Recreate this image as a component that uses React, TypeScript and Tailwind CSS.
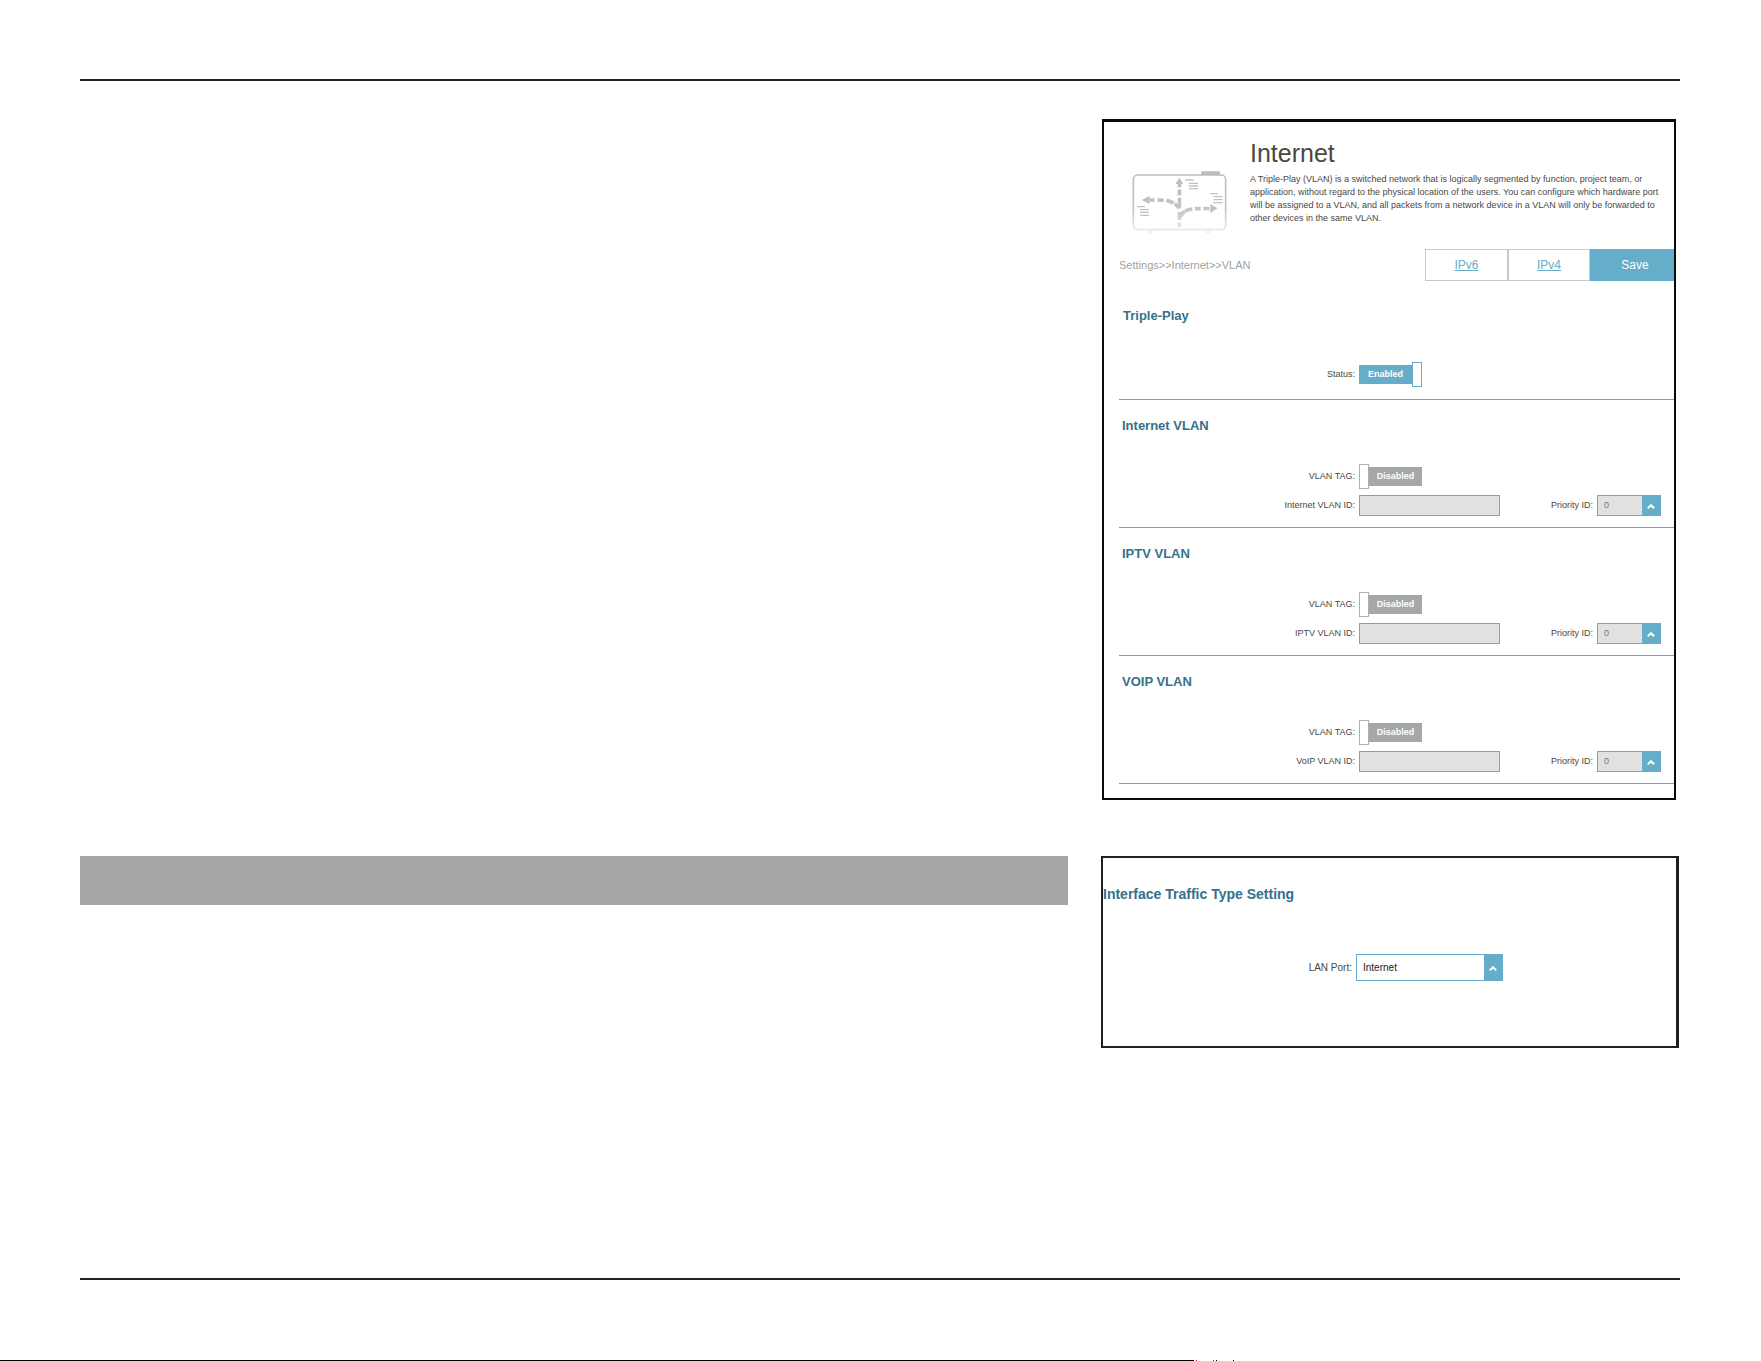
import React, { useState } from "react";

const vlans = [
  { id: "internet", title: "Internet VLAN", label: "Internet VLAN ID:" },
  { id: "iptv", title: "IPTV VLAN", label: "IPTV VLAN ID:" },
  { id: "voip", title: "VOIP VLAN", label: "VoIP VLAN ID:" },
];

const priorities = ["0", "1", "2", "3", "4", "5", "6", "7"];

function RouterIcon() {
  return (
    <svg
      viewBox="126 177 285 198"
      className="w-[95px] h-[66px] shrink-0"
      fill="none"
      aria-hidden="true"
    >
      <defs>
        <linearGradient
          id="fade"
          gradientUnits="userSpaceOnUse"
          x1="0"
          y1="180"
          x2="0"
          y2="372"
        >
          <stop offset="0" stopColor="#bcbcbc" />
          <stop offset="0.6" stopColor="#c4c4c4" />
          <stop offset="1" stopColor="#f2f2f2" />
        </linearGradient>
      </defs>
      <path d="M333 192v-7q0-4 4-4h49q4 0 4 4v7z" fill="url(#fade)" />
      <rect
        x="130"
        y="192"
        width="277"
        height="164"
        rx="13"
        stroke="url(#fade)"
        strokeWidth="5"
      />
      <path d="M176 358h12v9h-12zM348 358h12v9h-12z" fill="#f0f0f0" />
      <g stroke="url(#fade)" strokeWidth="11">
        <path d="M268.500 219L268 229M268.500 236L268 253M268.500 260L268 292M268.500 303L268 327M268.500 335L268 348" />
        <path d="M180 267h14M203 267.500h18M229 268q12 2 22 9M254 278q9 6 13 14" />
        <path d="M271 318q5-12 13-17M285 301q10-6 22-7M315 293h17M340 292.500h18" />
      </g>
      <path
        d="M268 200l12 19h-24zM155 267l24-12v24zM382 292l-21-13v27z"
        fill="#c0c0c0"
      />
      <g stroke="#c2c2c2" strokeWidth="4">
        <path d="M286 207h25M296 217h28M296 225h28M296 233h28" />
        <path d="M360 248h24M370 257h28M370 266h28M370 275h28" />
        <path d="M141 287h24M150 296h27M150 304h27M150 313h27" />
      </g>
    </svg>
  );
}

function Toggle({ id, initial }: { id: string; initial: boolean }) {
  const [on, setOn] = useState(initial);

  return (
    <button
      id={id}
      type="button"
      role="switch"
      aria-checked={on}
      onClick={() => setOn(!on)}
      className={`flex w-[63px] h-[25px] items-center text-[9px] leading-[19px] font-bold text-white ${
        on ? "" : "flex-row-reverse"
      }`}
    >
      <span
        className={`flex-1 h-[19px] text-center ${
          on ? "bg-[#65adc8]" : "bg-[#a7a7a5]"
        }`}
      >
        {on ? "Enabled" : "Disabled"}
      </span>
      <span
        className={`w-[10px] h-[25px] bg-white border ${
          on ? "border-[#65adc8]" : "border-[#b0b0b0]"
        }`}
      />
    </button>
  );
}

function Select({
  id,
  options,
  className,
}: {
  id: string;
  options: string[];
  className: string;
}) {
  return (
    <div className={`relative border border-[#65adc8] ${className}`}>
      <select
        id={id}
        className="block w-full h-full pl-[6px] pr-5 appearance-none outline-none"
      >
        {options.map((option) => (
          <option key={option}>{option}</option>
        ))}
      </select>
      <span className="absolute inset-y-0 right-0 w-[18px] bg-[#65adc8] flex items-center justify-center pointer-events-none">
        <svg viewBox="0 0 8 5" className="mt-[2px] w-2 h-[5px]" aria-hidden="true">
          <path
            d="M0.800 4.300L4 1.200L7.200 4.300"
            fill="none"
            stroke="#fff"
            strokeWidth="2"
          />
        </svg>
      </span>
    </div>
  );
}

function Row({
  id,
  label,
  children,
}: {
  id: string;
  label: string;
  children: React.ReactNode;
}) {
  return (
    <div className="grid grid-cols-[236fr_315fr] gap-x-1 items-center">
      <label htmlFor={id} className="text-right">
        {label}
      </label>
      <div className="flex items-center justify-between pr-[13px]">
        {children}
      </div>
    </div>
  );
}

function VlanSection({ id, title, label }: (typeof vlans)[number]) {
  return (
    <section className="pt-4 pb-[11px] border-b border-[#969696]">
      <h2 className="pl-[3px] text-[13px] leading-5 font-bold text-[#35718a]">
        {title}
      </h2>
      <div className="mt-7 flex flex-col gap-[6px]">
        <Row id={`${id}-tag`} label="VLAN TAG:">
          <Toggle id={`${id}-tag`} initial={false} />
        </Row>
        <Row id={`${id}-id`} label={label}>
          <input
            id={`${id}-id`}
            type="text"
            disabled
            className="w-[141px] h-[21px] px-1 bg-[#e1e1e1] border border-[#65adc8]"
          />
          <div className="flex items-center gap-1">
            <label htmlFor={`${id}-priority`}>Priority ID:</label>
            <Select
              id={`${id}-priority`}
              options={priorities}
              className="w-16 h-[21px] bg-[#e1e1e1] text-[#777777]"
            />
          </div>
        </Row>
      </div>
    </section>
  );
}

function InternetPanel() {
  return (
    <div className="ml-px mr-1 border-2 border-t-[3px] border-[#0b0a0b] pl-[15px] pb-[14px] text-[9px] text-[#4b483e]">
      <header className="flex items-end pl-[13px] pt-[15px]">
        <RouterIcon />
        <div className="pl-[23px] pb-[11px]">
          <h1 className="text-[25px] leading-8">Internet</h1>
          <p className="mt-1 leading-[13px] whitespace-nowrap">
            A Triple-Play (VLAN) is a switched network that is logically
            segmented by function, project team, or
            <br />
            application, without regard to the physical location of the users.
            You can configure which hardware port
            <br />
            will be assigned to a VLAN, and all packets from a network device in
            a VLAN will only be forwarded to
            <br />
            other devices in the same VLAN.
          </p>
        </div>
      </header>

      <div className="mt-[13px] flex items-center justify-between text-[11px]">
        <nav className="text-[#a0a0a0]">Settings&gt;&gt;Internet&gt;&gt;VLAN</nav>
        <div className="flex h-8 text-center text-xs leading-[30px]">
          <a
            href="#ipv6"
            className="w-[83px] border border-[#c8c8c8] text-[#65adc8] underline"
          >
            IPv6
          </a>
          <a
            href="#ipv4"
            className="w-[82px] border border-[#c8c8c8] text-[#65adc8] underline"
          >
            IPv4
          </a>
          <button type="button" className="w-[84px] pl-[6px] bg-[#65adc8] text-white">
            Save
          </button>
        </div>
      </div>

      <section className="pt-[25px] pb-3 border-b border-[#969696]">
        <h2 className="pl-1 text-[13px] leading-5 font-bold text-[#35718a]">
          Triple-Play
        </h2>
        <div className="mt-9">
          <Row id="status" label="Status:">
            <Toggle id="status" initial={true} />
          </Row>
        </div>
      </section>

      {vlans.map((vlan) => (
        <VlanSection key={vlan.id} {...vlan} />
      ))}
    </div>
  );
}

function TrafficPanel() {
  return (
    <div className="mr-px border-2 border-r-[3px] border-[#231f20] pt-[26px] pb-[65px] text-[10px] text-[#4b483e]">
      <h2 className="text-sm leading-5 font-bold text-[#35718a]">
        Interface Traffic Type Setting
      </h2>
      <div className="mt-[50px] grid grid-cols-[249fr_320fr] gap-x-1 items-center">
        <label htmlFor="lan-port" className="text-right">
          LAN Port:
        </label>
        <Select
          id="lan-port"
          options={["Internet", "IPTV", "VoIP"]}
          className="w-[147px] h-[27px] bg-white text-[#222222]"
        />
      </div>
    </div>
  );
}

export default function App() {
  return (
    <div className="min-h-screen flex flex-col bg-white font-['Liberation_Sans',Arial,sans-serif]">
      <main className="flex-1 flex flex-col pt-[79px] pb-[81px] pl-20 pr-[81px]">
        <div className="h-[2px] bg-[#231f20]" />
        <div className="pt-[38px] grid grid-cols-[988fr_579fr] gap-x-[33px] gap-y-14">
          <div />
          <InternetPanel />
          <div className="h-[49px] bg-[#a7a7a5]" />
          <TrafficPanel />
        </div>
        <div className="mt-auto h-[2px] bg-[#231f20]" />
      </main>
      <div className="-mt-px flex h-px">
        <div className="w-[67.8%] bg-black" />
        <div className="ml-[2px] w-px bg-red-600" />
        <div className="ml-4 w-px bg-red-600" />
        <div className="ml-[2px] w-px bg-black" />
        <div className="ml-4 w-px bg-black" />
      </div>
    </div>
  );
}
